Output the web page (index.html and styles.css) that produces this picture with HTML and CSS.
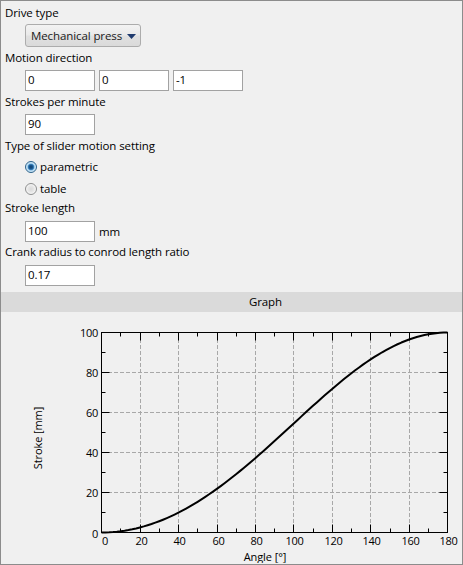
FILE: index.html
```html
<!DOCTYPE html>
<html>
<head>
<meta charset="utf-8">
<link rel="stylesheet" href="styles.css">
</head>
<body>
<div class="window">
  <div class="form">
    <div class="label first">Drive type</div>
    <div class="indent combo">
      <span>Mechanical press</span>
      <svg class="arrow" width="9" height="5" viewBox="0 0 9 5"><path d="M0 0H9L4.5 5Z" fill="#1f3a6e"/></svg>
    </div>
    <div class="label">Motion direction</div>
    <div class="indent inputs">
      <div class="input">0</div>
      <div class="input">0</div>
      <div class="input">-1</div>
    </div>
    <div class="label">Strokes per minute</div>
    <div class="indent inputs">
      <div class="input">90</div>
    </div>
    <div class="label">Type of slider motion setting</div>
    <div class="radios">
      <div class="indent radio"><span class="dot checked"></span><span>parametric</span></div>
      <div class="indent radio"><span class="dot"></span><span>table</span></div>
    </div>
    <div class="label tight">Stroke length</div>
    <div class="indent inputs wide-gap">
      <div class="input">100</div>
      <span class="unit">mm</span>
    </div>
    <div class="label tight2">Crank radius to conrod length ratio</div>
    <div class="indent inputs wide-gap">
      <div class="input">0.17</div>
    </div>
  </div>
  <div class="graph-bar">Graph</div>
  <svg class="chart" width="461" height="251" viewBox="1 312 461 251">
    <g class="grid">
      <path d="M140.5 333V532M178.5 333V532M217.5 333V532M255.5 333V532M293.5 333V532M332.5 333V532M370.5 333V532M409.5 333V532"/>
      <path d="M102 492.5H447M102 452.5H447M102 412.5H447M102 372.5H447"/>
    </g>
    <g class="ticks">
      <path d="M140.5 532.5v-8M178.5 532.5v-8M217.5 532.5v-8M255.5 532.5v-8M293.5 532.5v-8M332.5 532.5v-8M370.5 532.5v-8M409.5 532.5v-8"/>
      <path d="M120.5 532.5v-4M159.5 532.5v-4M197.5 532.5v-4M236.5 532.5v-4M274.5 532.5v-4M313.5 532.5v-4M351.5 532.5v-4M390.5 532.5v-4M428.5 532.5v-4"/>
      <path d="M140.5 332.5v8M178.5 332.5v8M217.5 332.5v8M255.5 332.5v8M293.5 332.5v8M332.5 332.5v8M370.5 332.5v8M409.5 332.5v8"/>
      <path d="M120.5 332.5v4M159.5 332.5v4M197.5 332.5v4M236.5 332.5v4M274.5 332.5v4M313.5 332.5v4M351.5 332.5v4M390.5 332.5v4M428.5 332.5v4"/>
      <path d="M101.5 492.5h8M101.5 452.5h8M101.5 412.5h8M101.5 372.5h8"/>
      <path d="M101.5 512.5h4M101.5 472.5h4M101.5 432.5h4M101.5 392.5h4M101.5 352.5h4"/>
      <path d="M447.5 492.5h-8M447.5 452.5h-8M447.5 412.5h-8M447.5 372.5h-8"/>
      <path d="M447.5 512.5h-4M447.5 472.5h-4M447.5 432.5h-4M447.5 392.5h-4M447.5 352.5h-4"/>
      <rect x="101.5" y="332.5" width="346" height="200"/>
    </g>
    <polyline id="curve" class="curve" points=""/>
    <g class="ylabels">
      <text x="98" y="537.5">0</text>
      <text x="98" y="497">20</text>
      <text x="98" y="457">40</text>
      <text x="98" y="417">60</text>
      <text x="98" y="377">80</text>
      <text x="98" y="337">100</text>
    </g>
    <g class="xlabels">
      <text x="105" y="545">0</text>
      <text x="141.5" y="545">20</text>
      <text x="179.5" y="545">40</text>
      <text x="218.5" y="545">60</text>
      <text x="256.5" y="545">80</text>
      <text x="294.5" y="545">100</text>
      <text x="333.5" y="545">120</text>
      <text x="371.5" y="545">140</text>
      <text x="410.5" y="545">160</text>
      <text x="448.5" y="545">180</text>
    </g>
    <text class="axis-title" x="265" y="560.5">Angle [°]</text>
    <text class="axis-title" x="0" y="0" transform="translate(41.5 438) rotate(-90)">Stroke [mm]</text>
  </svg>
</div>
<script src="script.js"></script>
</body>
</html>
```
FILE: styles.css
```css
* { box-sizing: border-box; }
body {
  margin: 0;
  font-family: "Open Sans", "Noto Sans", sans-serif;
  font-size: 11.5px;
  letter-spacing: -0.1px;
  color: #000;
}
.window {
  width: 463px;
  height: 565px;
  border: 1px solid #8c8c8c;
  background: #f0f0f0;
  overflow: hidden;
}
.form { padding: 4px 0 0 4px; }
.label {
  height: 16px;
  line-height: 16px;
  margin-top: 3px;
  white-space: nowrap;
}
.label.first { margin-top: 0; }
.label.tight { margin-top: 1px; }
.label.tight2 { margin-top: 2px; }
.indent { margin-left: 20px; }
.combo {
  margin-top: 3px;
  width: 116px;
  height: 23px;
  border: 1px solid #acacac;
  border-radius: 3px;
  background: linear-gradient(#f3f3f3, #e9e9e9 48%, #e0e0e0 52%, #dadada);
  display: flex;
  align-items: center;
  justify-content: space-between;
  padding: 0 4px 0 5px;
  color: #1a1a1a;
  white-space: nowrap;
}
.arrow { display: block; margin-top: 1px; flex: none; }
.inputs {
  display: flex;
  align-items: center;
  gap: 4px;
  margin-top: 4px;
}
.inputs.wide-gap { margin-top: 5px; }
.input {
  width: 70px;
  height: 21px;
  border: 1px solid #a2a2a2;
  background: #fff;
  padding-left: 2px;
  line-height: 18px;
}
.radios { margin-top: 1px; }
.radio {
  display: flex;
  align-items: center;
  height: 22px;
  padding-top: 1px;
}
.dot {
  width: 12px;
  height: 12px;
  border-radius: 50%;
  margin-right: 3px;
  border: 1px solid #8e8f8f;
  background: radial-gradient(circle at 50% 50%, #d9d9d9 0, #e6e6e6 3px, #f6f6f6 5px);
}
.dot.checked {
  border-color: #2c628b;
  background: radial-gradient(circle at 50% 50%, #0f3e6c 0, #1b5a92 2px, #4a8fc8 3px, #a9d3ef 3.6px, #d6ecf9 5px);
}
.graph-bar {
  margin-top: 6px;
  height: 20px;
  line-height: 20px;
  background: #dadada;
  text-align: center;
  padding-left: 68px;
}
.chart { display: block; }
.chart text {
  font-family: "Open Sans", "Noto Sans", sans-serif;
  font-size: 11px;
  fill: #000;
}
.ylabels text, .xlabels text { letter-spacing: -0.3px; }
.grid path {
  stroke: #a8a8a8;
  stroke-width: 1;
  stroke-dasharray: 4 2;
  fill: none;
}
.ticks path, .ticks rect {
  stroke: #000;
  stroke-width: 1;
  fill: none;
}
.curve {
  fill: none;
  stroke: #000;
  stroke-width: 2;
  stroke-linejoin: round;
}
.ylabels text { text-anchor: end; }
.xlabels text { text-anchor: middle; }
.chart .axis-title { text-anchor: middle; }
```
FILE: script.js
```js
(function () {
  var r = 50, lam = 0.17, l = r / lam;
  var pts = [];
  for (var d = 0; d <= 180; d += 2) {
    var t = d * Math.PI / 180;
    var sn = Math.sin(t);
    var s = r * (1 - Math.cos(t)) - l * (1 - Math.sqrt(1 - lam * lam * sn * sn));
    var x = 101.5 + d * 346 / 180;
    var y = 532.5 - s * 2;
    pts.push(x.toFixed(2) + "," + y.toFixed(2));
  }
  document.getElementById("curve").setAttribute("points", pts.join(" "));
})();
```
